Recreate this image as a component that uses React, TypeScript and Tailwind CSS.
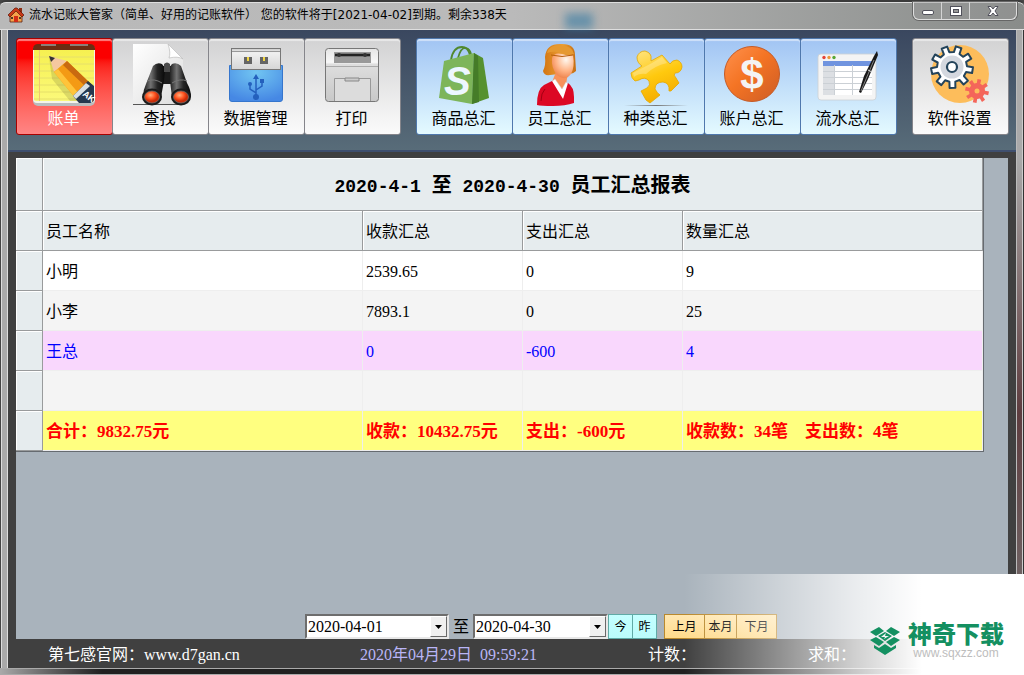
import React, { useState } from "react";

type IconProps = { className?: string };

const range = (n: number) => Array.from({ length: n }, (_, i) => i);

// Closed outline of a cog wheel
function gearPath(cx: number, cy: number, outer: number, inner: number, teeth: number, turn = 0) {
  const step = (Math.PI * 2) / teeth;
  const pt = (r: number, a: number) =>
    `${(cx + r * Math.cos(a)).toFixed(1)} ${(cy + r * Math.sin(a)).toFixed(1)}`;
  return (
    range(teeth)
      .map((i) => {
        const a = turn + i * step;
        return `${i === 0 ? "M" : "L"}${pt(inner, a - step * 0.28)} L${pt(outer, a - step * 0.2)} L${pt(
          outer,
          a + step * 0.2
        )} L${pt(inner, a + step * 0.28)}`;
      })
      .join(" ") + "Z"
  );
}

function BillIcon({ className }: IconProps) {
  return (
    <svg viewBox="0 0 64 64" className={className} aria-hidden="true">
      <defs>
        <linearGradient id="note" x1="0" y1="0" x2="0" y2="1">
          <stop offset="0" stopColor="#f6f04f" />
          <stop offset="1" stopColor="#fbf97a" />
        </linearGradient>
      </defs>
      <rect x="1" y="4" width="62" height="59" rx="5" fill="#b9bcbd" />
      <rect x="1" y="3" width="62" height="57" rx="4" fill="#f4f4ea" />
      <rect x="2" y="5" width="60" height="53" rx="2" fill="url(#note)" />
      {range(7).map((i) => (
        <path key={i} d={`M2 ${14 + i * 7}H62`} stroke="#e6e06a" strokeWidth="1" />
      ))}
      <path d="M7.500 7V58" stroke="#f0c870" />
      <path d="M1 7V5Q2 1 6 1H58Q62 1 63 5V7Z" fill="#6b2d12" />
      <path d="M9 2H24M38 2H56" stroke="#999" strokeWidth="1.500" />
      <path d="M17 14L38 22L58 43L46 58L38 58L20 36Z" fill="#000" opacity=".12" />
      <path d="M17 13L35 18L22 29Z" fill="#f4c8a0" />
      <path d="M17 13L23 15L19 19Z" fill="#333" />
      <path d="M35 18L59 41L44 56L22 29Z" fill="#f49a14" />
      <path d="M35 18L59 41L55 45L31 22Z" fill="#c96a10" />
      <path d="M26 26L22 29L44 56L48 52Z" fill="#ffc43a" />
      <path d="M56 38L62 43V57Q61 60 58 60H47L41 53Z" fill="#26384e" />
      <path d="M54 40L58 43L44 56L41 53Z" fill="#d9dfe2" />
      <text
        x="50"
        y="52"
        transform="rotate(38 50 52)"
        fill="#fff"
        className="font-['Liberation_Sans',sans-serif] text-[9px] font-bold"
      >
        AK
      </text>
    </svg>
  );
}

function FindIcon({ className }: IconProps) {
  return (
    <svg viewBox="0 0 64 64" className={className} aria-hidden="true">
      <defs>
        <linearGradient id="paper" x1="0" y1="0" x2="1" y2="1">
          <stop offset="0" stopColor="#fff" />
          <stop offset="1" stopColor="#dcdcdc" />
        </linearGradient>
        <linearGradient id="barrel" x1="0" y1="0" x2="1" y2="0">
          <stop offset="0" stopColor="#161616" />
          <stop offset=".35" stopColor="#727272" />
          <stop offset=".65" stopColor="#252525" />
          <stop offset="1" stopColor="#080808" />
        </linearGradient>
        <radialGradient id="lens" cx=".4" cy=".35">
          <stop offset="0" stopColor="#ffb080" />
          <stop offset=".6" stopColor="#ff5420" />
          <stop offset="1" stopColor="#c82c08" />
        </radialGradient>
      </defs>
      <path d="M5 1H40L55 16V62H5Z" fill="url(#paper)" />
      <path d="M5 61.500H55" stroke="#555" />
      <path d="M40 1Q43 10 41 15Q50 13 55 16Z" fill="#fff" stroke="#bbb" strokeWidth=".7" />
      <path d="M34 23H44V41H34Z" fill="#1b1b1b" />
      <path d="M25 23Q29 19 34 21L37 25L36 38L33 54H15Q15 47 18 41Z" fill="url(#barrel)" />
      <path d="M53 23Q49 19 44 21L41 25L42 38L44 54H63Q63 47 59 40Z" fill="url(#barrel)" />
      <path d="M36 21Q39 18 42 21V29H36Z" fill="#4b4b4b" />
      <path d="M19 38Q26 35 34 40M44 40Q52 35 59 38" stroke="#777" fill="none" />
      <ellipse cx="24" cy="54" rx="10" ry="8.500" fill="#1a1a1a" />
      <ellipse cx="53" cy="54" rx="10" ry="8.500" fill="#1a1a1a" />
      <ellipse cx="24" cy="54" rx="7.500" ry="6" fill="url(#lens)" stroke="#777" strokeWidth=".7" />
      <ellipse cx="53" cy="54" rx="7.500" ry="6" fill="url(#lens)" stroke="#777" strokeWidth=".7" />
    </svg>
  );
}

function UsbIcon({ className }: IconProps) {
  return (
    <svg viewBox="0 0 64 64" className={className} aria-hidden="true">
      <defs>
        <radialGradient id="usbBody" cx=".5" cy=".2" r=".8">
          <stop offset="0" stopColor="#71c5f2" />
          <stop offset="1" stopColor="#4688e4" />
        </radialGradient>
        <linearGradient id="plug" x1="0" y1="0" x2="0" y2="1">
          <stop offset="0" stopColor="#cacaca" />
          <stop offset=".2" stopColor="#f0f0f0" />
          <stop offset="1" stopColor="#d6d6d6" />
        </linearGradient>
      </defs>
      <path d="M5.500 22.500H58.500V56Q58.500 58.500 56 58.500H8Q5.500 58.500 5.500 56Z" fill="url(#usbBody)" stroke="#3676cd" />
      <rect x="7.500" y="5.500" width="49" height="21" fill="url(#plug)" stroke="#777" />
      <path d="M8 8.500H56" stroke="#999" />
      <rect x="20" y="14" width="8" height="7" fill="#656565" />
      <rect x="36" y="14" width="8" height="7" fill="#656565" />
      <path d="M24 14V18M40 14V18" stroke="#f2d642" strokeWidth="2" />
      <g stroke="#2460bd" strokeWidth="1.500" fill="none">
        <path d="M32 35V54M32 50L26 46V41M32 47L38 43V38" />
      </g>
      <path d="M32 31L35 36H29Z" fill="#2460bd" />
      <circle cx="32" cy="54" r="3" fill="#2460bd" />
      <circle cx="26" cy="41" r="2" fill="#2460bd" />
      <rect x="36" y="36" width="4" height="4" fill="#2460bd" />
    </svg>
  );
}

function PrinterIcon({ className }: IconProps) {
  return (
    <svg viewBox="0 0 64 64" className={className} aria-hidden="true">
      <defs>
        <linearGradient id="printer" x1="0" y1="0" x2="0" y2="1">
          <stop offset="0" stopColor="#e5e5e5" />
          <stop offset=".26" stopColor="#f8f8f8" />
          <stop offset=".3" stopColor="#dedede" />
          <stop offset="1" stopColor="#c8c8c8" />
        </linearGradient>
      </defs>
      <rect x="5.500" y="5.500" width="53" height="53" rx="3" fill="url(#printer)" stroke="#777" />
      <path d="M6 23.500H58" stroke="#aaa" />
      <rect x="14" y="9" width="37" height="11" fill="#999" />
      <rect x="15" y="10" width="35" height="4" fill="#777" />
      <path d="M15 12H50" stroke="#222" strokeWidth="2" />
      <circle cx="19" cy="12" r="2" fill="#333" />
      <circle cx="45" cy="12" r="2" fill="#333" />
      <path d="M14.500 58V35.500H50.500V58" fill="#dcdcdc" stroke="#999" />
      <path d="M25 35V38H39V35Z" fill="#ccc" stroke="#888" />
    </svg>
  );
}

function BagIcon({ className }: IconProps) {
  return (
    <svg viewBox="0 0 64 64" className={className} aria-hidden="true">
      <g fill="none" stroke="#51892f" strokeWidth="1.800">
        <path d="M19 17Q21 4 30 4Q36 4 38 12" />
        <path d="M26 15Q29 4 34 5Q38 6 39 11" />
      </g>
      <path d="M12 18L42 10L40 61L7 55Z" fill="#7db55a" />
      <path d="M42 10L51 15L57 55L40 61Z" fill="#56912f" />
      <path d="M42 10L46 13L47 59L40 61Z" fill="#457c28" />
      <text
        x="12"
        y="52"
        fill="#edf7ff"
        className="font-['Liberation_Sans',sans-serif] text-[40px] font-bold italic"
      >
        S
      </text>
    </svg>
  );
}

function StaffIcon({ className }: IconProps) {
  return (
    <svg viewBox="0 0 64 64" className={className} aria-hidden="true">
      <defs>
        <radialGradient id="face" cx=".65" cy=".25" r=".75">
          <stop offset="0" stopColor="#fff8ef" />
          <stop offset=".6" stopColor="#ffb588" />
          <stop offset="1" stopColor="#ef8650" />
        </radialGradient>
        <linearGradient id="hair" x1="0" y1="0" x2="1" y2="0">
          <stop offset="0" stopColor="#d27512" />
          <stop offset=".6" stopColor="#ec9f36" />
          <stop offset="1" stopColor="#c46c10" />
        </linearGradient>
      </defs>
      <path d="M17 14Q18 1 32 1Q47 0 47 12L48 28Q44 32 40 30L22 32Q16 33 15 28Q18 22 17 14Z" fill="url(#hair)" />
      <path d="M28 29H40L38 42L35 50L24 39Z" fill="#f7925b" />
      <path d="M24 15Q26 9 34 11Q40 13 45 12Q47 24 43 31Q37 39 29 32Q23 25 24 15Z" fill="url(#face)" />
      <path d="M19 10Q28 7 36 11Q42 13 46 11Q45 3 32 2Q21 2 19 10Z" fill="#e69931" />
      <path d="M23 12Q34 15 45 12" stroke="#b95e0c" fill="none" />
      <path d="M23 39L27 36L34 46L38 39L41 42L36 57L25 45Z" fill="#fff" stroke="#ccc" strokeWidth=".5" />
      <path d="M9 62Q9 46 16 42L24 38L35 56L40 40Q46 44 46 54V60Q37 63 25 63Q13 63 9 62Z" fill="#dc0824" />
      <path d="M13 58Q13 50 17 46" stroke="#a40012" fill="none" />
    </svg>
  );
}

function PuzzleIcon({ className }: IconProps) {
  return (
    <svg viewBox="0 0 64 64" className={className} aria-hidden="true">
      <defs>
        <linearGradient id="puzzle" x1=".2" y1="0" x2=".6" y2="1">
          <stop offset="0" stopColor="#ffe27a" />
          <stop offset=".5" stopColor="#ffc90e" />
          <stop offset="1" stopColor="#f2a900" />
        </linearGradient>
        <linearGradient id="puzzleShadow" x1="0" y1="0" x2="1" y2="0">
          <stop offset="0" stopColor="#777" stopOpacity="0" />
          <stop offset=".5" stopColor="#777" />
          <stop offset="1" stopColor="#777" stopOpacity="0" />
        </linearGradient>
      </defs>
      <path
        d="M7 30L18 23Q13 20 13 14Q15 8 21 8Q28 10 27 16L27 18L38 12L46 21Q48 17 53 17Q58 19 58 24Q57 30 51 30Q49 32 52 35L55 40L47 48H45Q46 40 39 39Q31 39 31 46Q33 50 36 52L26 60L22 57L17 48L23 45Q27 42 25 38Q21 33 15 37L11 38Q7 35 7 30Z"
        fill="url(#puzzle)"
        stroke="#e4a800"
        strokeWidth=".8"
      />
      <path d="M9 30L28 20L38 14L43 20Q30 23 22 31Q15 30 10 34Z" fill="#fff" opacity=".25" />
      <rect x="0" y="62" width="64" height="1" fill="url(#puzzleShadow)" />
    </svg>
  );
}

function DollarIcon({ className }: IconProps) {
  return (
    <svg viewBox="0 0 64 64" className={className} aria-hidden="true">
      <defs>
        <linearGradient id="coin" x1="0" y1="0" x2="1" y2="1">
          <stop offset="0" stopColor="#ff914e" />
          <stop offset=".45" stopColor="#f47424" />
          <stop offset="1" stopColor="#cd5c25" />
        </linearGradient>
      </defs>
      <circle cx="32" cy="31" r="27.500" fill="url(#coin)" stroke="#c45b27" />
      <text
        x="32"
        y="46"
        textAnchor="middle"
        fill="#f4f4f4"
        className="font-['Liberation_Sans',sans-serif] text-[42px] font-bold"
      >
        $
      </text>
    </svg>
  );
}

function LedgerIcon({ className }: IconProps) {
  return (
    <svg viewBox="0 0 64 64" className={className} aria-hidden="true">
      <rect x="2" y="11" width="58" height="46" rx="3" fill="#f4f4f4" stroke="#ccd0d4" strokeWidth=".8" />
      <rect x="7" y="18" width="49" height="34" fill="#fff" />
      <rect x="7" y="22" width="11" height="30" fill="#dcdfe3" />
      <rect x="7" y="18" width="49" height="5" fill="#7094df" />
      <path d="M7 28.500H56M7 34.500H56M7 40.500H56M7 46.500H56M18.500 22V52M36.500 22V52" stroke="#cbd0d5" />
      <circle cx="8" cy="14.500" r="1.700" fill="#e64437" />
      <circle cx="13" cy="14.500" r="1.700" fill="#ee973b" />
      <circle cx="18" cy="14.500" r="1.700" fill="#57a735" />
      <path d="M61 8L62 12L52 36L45 50L43 49L48 33L58 13Z" fill="#181818" />
      <path d="M58 17L50 36L45 48" stroke="#808080" fill="none" />
      <path d="M52 27L56 29" stroke="#ddd" />
    </svg>
  );
}

function SettingsIcon({ className }: IconProps) {
  return (
    <svg viewBox="0 0 64 64" className={className} aria-hidden="true">
      <circle cx="32" cy="31" r="29" fill="#fdbd5b" />
      <path d={gearPath(24, 24, 21, 15, 9, 0.15)} fill="#fff" stroke="#24445b" strokeWidth="2" strokeLinejoin="round" />
      <circle cx="24" cy="24" r="11.500" fill="#d4d8df" />
      <circle cx="24" cy="24" r="5" fill="#fff" stroke="#24445b" strokeWidth="2.200" />
      <path d={gearPath(49, 48, 12, 8, 8, 0.2)} fill="#f4655a" />
      <circle cx="49" cy="48" r="2.500" fill="#fdbd5b" />
    </svg>
  );
}

function HouseIcon({ className }: IconProps) {
  return (
    <svg viewBox="0 0 16 16" className={className} aria-hidden="true">
      <path d="M11 1H14V6H11Z" fill="#8c2d12" />
      <path d="M2 8L8 3L14 8V15H2Z" fill="#f3a24b" stroke="#5b2010" strokeWidth=".8" />
      <path d="M0 8L7 1H9L16 8L14 10L8 4L2 10Z" fill="#c83817" stroke="#591707" strokeWidth=".7" />
      <path d="M6 9H10V15H6Z" fill="#d22d17" />
      <path d="M3 10H5V12H3ZM11 10H13V12H11Z" fill="#50382a" />
    </svg>
  );
}

const basicTools = [
  { name: "账单", icon: BillIcon },
  { name: "查找", icon: FindIcon },
  { name: "数据管理", icon: UsbIcon },
  { name: "打印", icon: PrinterIcon },
];

const summaryTools = [
  { name: "商品总汇", icon: BagIcon },
  { name: "员工总汇", icon: StaffIcon },
  { name: "种类总汇", icon: PuzzleIcon },
  { name: "账户总汇", icon: DollarIcon },
  { name: "流水总汇", icon: LedgerIcon },
];

const tones = {
  red: "border-[#a80000] bg-linear-to-b from-[#fb0000] from-20% to-[#ff8585] text-white",
  gray: "border-[#85858b] bg-linear-to-b from-[#d2d2d3] to-[#fbfbfb] text-black",
  blue: "border-[#4f78ad] bg-linear-to-b from-[#a1c4f3] to-[#e4faff] text-black",
};

function ToolButton({
  name,
  icon: Icon,
  tone,
}: {
  name: string;
  icon: React.ComponentType<IconProps>;
  tone: keyof typeof tones;
}) {
  return (
    <button
      type="button"
      className={`-mr-px flex h-[97px] w-[97px] shrink-0 flex-col items-center rounded-[3px] border pt-1 pr-0.5 text-base leading-6 shadow-[inset_0_2px_1px_rgba(255,255,255,0.5)] ${tones[tone]}`}
    >
      <Icon className="size-16 shrink-0" />
      {name}
    </button>
  );
}

const columns = ["员工名称", "收款汇总", "支出汇总", "数量汇总"];

const rows = [
  ["小明", "2539.65", "0", "9"],
  ["小李", "7893.1", "0", "25"],
  ["王总", "0", "-600", "4"],
  ["", "", "", ""],
];

const totals = ["合计：9832.75元", "收款：10432.75元", "支出：-600元", "收款数：34笔\u3000支出数：4笔"];

const headCell = "border-r border-b border-[#999b9c] bg-[#e6ecee] shadow-[inset_1px_1px_0_#fff]";

function SummaryTable() {
  const [selected, setSelected] = useState(2);

  return (
    <table className="w-full table-fixed border-separate border-spacing-0 border-b border-[#666b70] text-left text-base">
      <colgroup>
        <col className="w-[27px]" />
        <col className="w-80" />
        <col className="w-40" />
        <col className="w-40" />
        <col />
      </colgroup>
      <thead>
        <tr className="h-[53px]">
          <th className={headCell} />
          <th colSpan={4} className={`${headCell} pt-1 text-center text-xl font-bold whitespace-pre`}>
            <span className="font-['Liberation_Mono','Noto_Sans_CJK_SC',monospace] text-lg">2020-4-1 </span>
            至
            <span className="font-['Liberation_Mono','Noto_Sans_CJK_SC',monospace] text-lg"> 2020-4-30 </span>
            员工汇总报表
          </th>
        </tr>
        <tr className="h-10">
          <th className={headCell} />
          {columns.map((c) => (
            <th key={c} className={`${headCell} pt-0.5 pl-[3px] font-normal`}>
              {c}
            </th>
          ))}
        </tr>
      </thead>
      <tbody>
        {rows.map((row, i) => (
          <tr
            key={i}
            onClick={() => setSelected(i)}
            className={`h-10 ${
              i === selected ? "bg-[#f9d7fd] text-[#0000ff]" : i === 0 ? "bg-white" : "bg-[#f4f4f4]"
            }`}
          >
            <td className={headCell} />
            {row.map((cell, j) => (
              <td key={j} className="border-r border-b border-[#eeeeee] pt-0.5 pl-[3px]">
                {cell}
              </td>
            ))}
          </tr>
        ))}
      </tbody>
      <tfoot>
        <tr className="h-10 bg-[#ffff80] text-[17px] font-bold text-[#ff0000]">
          <td className={headCell} />
          {totals.map((t) => (
            <td key={t} className="border-r border-b border-[#eeeeee] pt-0.5 pl-[3px] whitespace-nowrap">
              {t}
            </td>
          ))}
        </tr>
      </tfoot>
    </table>
  );
}

function DateBox({ label, value, width }: { label: string; value: string; width: string }) {
  return (
    <div
      className={`flex h-[25px] border-2 border-t-[#6d6d6d] border-r-[#e8e8e8] border-b-[#e8e8e8] border-l-[#6d6d6d] bg-white ${width}`}
    >
      <input aria-label={label} defaultValue={value} className="w-full min-w-0 pl-px text-base text-black outline-none" />
      <button
        type="button"
        aria-label={`选择${label}`}
        className="flex w-[17px] shrink-0 items-center justify-center border border-t-white border-r-[#696969] border-b-[#696969] border-l-white bg-[#f0f0f0]"
      >
        <svg viewBox="0 0 7 4" className="h-1 w-[7px]" aria-hidden="true">
          <path d="M0 0H7L3.500 4Z" fill="#000" />
        </svg>
      </button>
    </div>
  );
}

const dayButton = "-mr-px h-[25px] w-[25px] border border-[#60aaa6] bg-linear-to-b from-[#c4ffff] to-[#bafcfb] text-xs text-black";
const monthButton = "-mr-px h-[25px] border border-[#b9892e] bg-linear-to-b from-[#ffe7b2] to-[#ffdb8b] text-xs text-black";

function Watermark() {
  return (
    <div className="pointer-events-none absolute right-0 bottom-0 flex h-[101px] w-[340px] items-center justify-end bg-linear-to-r from-white/0 via-white/75 via-50% to-white to-70% pt-8 pr-5">
      <svg viewBox="0 0 30 28" className="mr-2 h-7 w-[30px]" aria-hidden="true">
        <g fill="#149061">
          <path d="M0 5L9 0L14 4L6 9Z" />
          <path d="M30 5L21 0L16 4L24 9Z" />
          <path d="M0 13L6 10L14 15L9 19Z" />
          <path d="M30 13L24 10L16 15L21 19Z" />
          <path d="M4 18L9 21L15 17L21 21L26 18V21L15 28L4 21Z" />
          <path d="M15 5L8 9L15 14L22 9ZM16 6L15 9H19L14 12L15 10H11Z" fillRule="evenodd" />
        </g>
      </svg>
      <div className="text-center">
        <p className="text-2xl leading-6 font-black text-[#149061]">神奇下载</p>
        <p className="font-['Liberation_Sans',sans-serif] text-xs leading-3 text-[#bdbdbd]">www.sqxzz.com</p>
      </div>
    </div>
  );
}

export default function App() {
  return (
    <div className="relative flex min-h-screen flex-col overflow-hidden bg-[#454545] font-['Liberation_Serif','Noto_Sans_CJK_SC',serif]">
      {/* Title bar */}
      <header className="flex h-[30px] shrink-0 items-start justify-between rounded-t-md border-t-2 border-b border-t-[#3b3b3b] border-b-[#dedede] bg-linear-to-r from-[#b9b9b9] via-[#bababa] via-50% to-[#898c8a] pr-[7px] pl-2 shadow-[inset_0_1px_0_#dedede]">
        <div className="flex items-center gap-[5px] pt-1">
          <HouseIcon className="size-4" />
          <h1 className="font-['DejaVu_Sans','Noto_Sans_CJK_SC',sans-serif] text-xs leading-[18px] whitespace-pre text-black">
            流水记账大管家（简单、好用的记账软件） 您的软件将于[2021-04-02]到期。剩余338天
          </h1>
        </div>
        <div className="mr-[320px] ml-auto h-4 w-7 self-end bg-[#377ca4]/60 blur-xs" />
        <div className="flex h-[18px] divide-x divide-[#d4d4d4] rounded-b-md border border-t-0 border-[#dedede] bg-[#999]/40 shadow-[0_0_0_1px_#666]">
          <button type="button" aria-label="最小化" className="flex w-7 items-center justify-center pt-1">
            <span className="h-[5px] w-3 rounded-xs border border-[#51515b] bg-white" />
          </button>
          <button type="button" aria-label="最大化" className="flex w-7 items-center justify-center">
            <span className="flex h-[10px] w-3 items-center justify-center border border-[#51515b] bg-white">
              <span className="h-1 w-[6px] border border-[#51515b] bg-[#999]" />
            </span>
          </button>
          <button type="button" aria-label="关闭" className="flex w-[46px] items-center justify-center">
            <svg viewBox="0 0 12 10" className="h-[10px] w-3" aria-hidden="true">
              <path d="M1 .5H4L6 3L8 .5H11L8 5L11 9.500H8L6 7L4 9.500H1L4 5Z" fill="#fff" stroke="#51515b" />
            </svg>
          </button>
        </div>
      </header>

      <div className="flex flex-1">
        <div className="w-2 shrink-0 border-r border-l border-r-[#ddd] border-l-[#444] bg-[#aaa] shadow-[inset_1px_0_0_#ddd]" />

        <div className="flex min-w-0 flex-1 flex-col bg-[#404040]">
          {/* Toolbar */}
          <nav className="flex h-[122px] shrink-0 items-start gap-4 border-b-2 border-[#3f4f6e] bg-linear-to-b from-[#3a475f] to-[#586c79] px-2 pt-2">
            <div className="flex">
              {basicTools.map((t, i) => (
                <ToolButton key={t.name} name={t.name} icon={t.icon} tone={i === 0 ? "red" : "gray"} />
              ))}
            </div>
            <div className="flex">
              {summaryTools.map((t) => (
                <ToolButton key={t.name} name={t.name} icon={t.icon} tone="blue" />
              ))}
            </div>
            <ToolButton name="软件设置" icon={SettingsIcon} tone="gray" />
          </nav>

          {/* Report */}
          <main className="mx-2 mt-[6px] flex flex-1 flex-col bg-[#a9b3bc]">
            <div className="mr-[24px] border-r border-[#666b70]">
              <SummaryTable />
            </div>
            <form className="mt-auto flex items-center pl-[289px]" onSubmit={(e) => e.preventDefault()}>
              <DateBox label="开始日期" value="2020-04-01" width="w-36" />
              <span className="w-6 text-center text-base leading-6">至</span>
              <DateBox label="结束日期" value="2020-04-30" width="w-[135px]" />
              <div className="flex">
                <button type="button" className={dayButton}>今</button>
                <button type="button" className={dayButton}>昨</button>
              </div>
              <div className="ml-2 flex">
                <button type="button" className={`${monthButton} w-[41px]`}>上月</button>
                <button type="button" className={`${monthButton} w-[33px]`}>本月</button>
                <button type="button" className={`${monthButton} w-[41px]`}>下月</button>
              </div>
            </form>
          </main>

          {/* Status bar */}
          <footer className="grid h-[29px] shrink-0 grid-cols-[312px_288px_160px_1fr] items-center pt-[3px] pl-10 text-base text-white">
            <span>
              第七感官网：
              <a href="http://www.d7gan.cn">www.d7gan.cn</a>
            </span>
            <time className="whitespace-pre text-[#b9b5f6]">2020年04月29日  09:59:21</time>
            <span>计数：</span>
            <span>求和：</span>
          </footer>
        </div>

        <div className="w-2 shrink-0 border-r border-l border-r-[#333] border-l-[#bbb] bg-linear-to-b from-[#aaa] from-20% via-[#5e3d40] via-60% to-[#777] shadow-[inset_-1px_0_0_#ccc]" />
      </div>
      <div className="h-[7px] shrink-0 border-y border-[#aaa] bg-linear-to-r from-[#aaa] to-[#202020] to-10%" />

      <Watermark />
    </div>
  );
}
